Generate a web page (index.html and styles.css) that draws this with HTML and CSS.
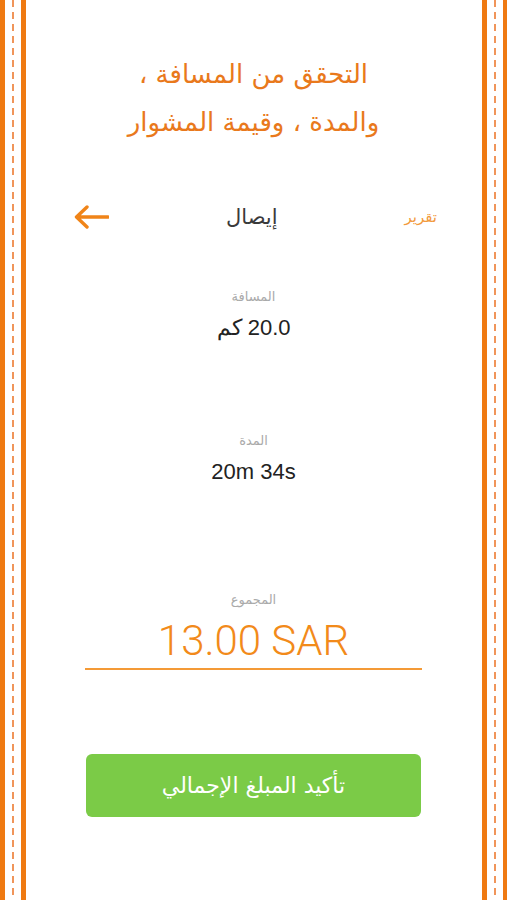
FILE: index.html
```html
<!DOCTYPE html>
<html lang="ar" dir="rtl">
<head>
    <meta charset="UTF-8">
    <meta name="viewport" content="width=device-width, initial-scale=1.0">
    <title>إيصال</title>
    <link rel="stylesheet" href="styles.css">
</head>
<body>
    <div class="frame">
        <h1 class="title">التحقق من المسافة ،<br>والمدة ، وقيمة المشوار</h1>

        <div class="nav">
            <span class="report">تقرير</span>
            <span class="nav-title">إيصال</span>
            <span class="back">
                <svg width="36" height="26" viewBox="0 0 36 26">
                    <path d="M35 13 H4 M14 3 L3.5 13 L14 23" fill="none" stroke="#f08418" stroke-width="3.4" stroke-linecap="round" stroke-linejoin="round"/>
                </svg>
            </span>
        </div>

        <div class="field">
            <div class="label">المسافة</div>
            <div class="value">20.0 كم</div>
        </div>

        <div class="field field-time">
            <div class="label">المدة</div>
            <div class="value" dir="ltr">20m 34s</div>
        </div>

        <div class="field field-total">
            <div class="label">المجموع</div>
            <div class="total" dir="ltr">13.00 SAR</div>
        </div>

        <button class="confirm">تأكيد المبلغ الإجمالي</button>
    </div>
</body>
</html>
```

FILE: styles.css
```css
body {
    margin: 0;
    background: #fff;
    font-family: "DejaVu Sans", sans-serif;
}

/* orange double frame with dashed line in between */
.frame {
    min-height: 900px;
    box-sizing: border-box;
    padding: 50px 0 0;
    display: flex;
    flex-direction: column;
    align-items: center;
    background:
        linear-gradient(#ef7a12, #ef7a12) 0 0 / 5px 100% no-repeat,
        repeating-linear-gradient(to bottom, #f0955a 0 7px, transparent 7px 12px) 12px 0 / 2px 100% no-repeat,
        linear-gradient(#ef7a12, #ef7a12) 21px 0 / 5px 100% no-repeat,
        linear-gradient(#ef7a12, #ef7a12) 482px 0 / 5px 100% no-repeat,
        repeating-linear-gradient(to bottom, #f0955a 0 7px, transparent 7px 12px) 494px 0 / 2px 100% no-repeat,
        linear-gradient(#ef7a12, #ef7a12) 503px 0 / 4px 100% no-repeat;
}

.title {
    margin: 0;
    font-family: "DejaVu Sans", serif;
    font-weight: normal;
    font-size: 26px;
    line-height: 48px;
    color: #e9791c;
    text-align: center;
}

.nav {
    align-self: stretch;
    padding: 0 70px 0 73px;
    margin-top: 58px;
    display: flex;
    align-items: center;
    justify-content: space-between;
}

.report {
    color: #f29a3c;
    font-size: 15px;
}

.nav-title {
    color: #3a3a3a;
    font-size: 21px;
    margin-right: 10px;
}

.back {
    display: flex;
    width: 36px;
}

.field {
    margin-top: 57px;
    text-align: center;
}

.field-time {
    margin-top: 86px;
}

.field-total {
    margin-top: 101px;
    width: 337px;
    border-bottom: 2px solid #f49a36;
}

.label {
    color: #aaa;
    font-size: 13px;
    line-height: 20px;
}

.value {
    color: #222;
    font-family: "Liberation Sans", sans-serif;
    font-size: 22px;
    line-height: 34px;
    margin-top: 4px;
}

.total {
    color: #f28a1a;
    font-family: "Roboto", "Liberation Sans", sans-serif;
    font-weight: 300;
    font-size: 42px;
    line-height: 48px;
    margin-top: 7px;
    padding-bottom: 3px;
}

.confirm {
    margin-top: 84px;
    width: 335px;
    height: 63px;
    border: none;
    border-radius: 6px;
    background: #7bcb47;
    color: #fff;
    font-family: "DejaVu Sans", sans-serif;
    font-size: 22px;
}
```
